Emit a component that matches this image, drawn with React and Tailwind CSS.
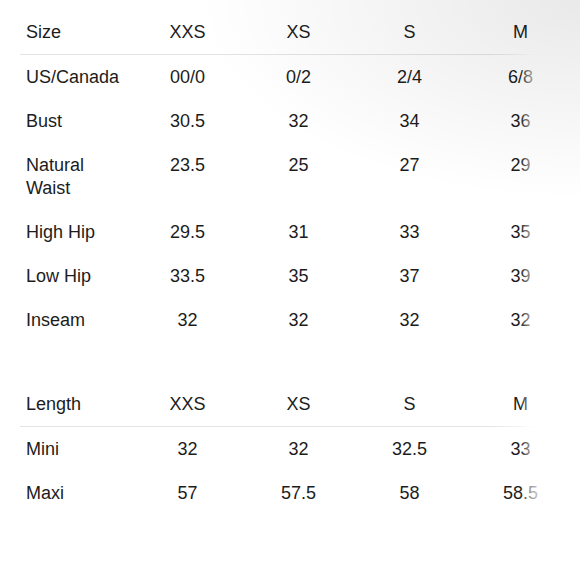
import React from "react"

const sizes = ["XXS", "XS", "S", "M"]

const bodyRows = [
  { label: "US/Canada", values: ["00/0", "0/2", "2/4", "6/8"] },
  { label: "Bust", values: ["30.5", "32", "34", "36"] },
  { label: ["Natural", "Waist"], values: ["23.5", "25", "27", "29"] },
  { label: "High Hip", values: ["29.5", "31", "33", "35"] },
  { label: "Low Hip", values: ["33.5", "35", "37", "39"] },
  { label: "Inseam", values: ["32", "32", "32", "32"] },
]

const lengthRows = [
  { label: "Mini", values: ["32", "32", "32.5", "33"] },
  { label: "Maxi", values: ["57", "57.5", "58", "58.5"] },
]

function Row({ label, values }) {
  return (
    <div className="grid grid-cols-[112px_111px_111px_111px_111px] py-[10.5px] leading-[23px]">
      <div className="pl-[6px]">
        {Array.isArray(label) ? (
          <>
            {label[0]}
            <br />
            {label[1]}
          </>
        ) : (
          label
        )}
      </div>
      {values.map((v, i) => (
        <div key={i} className="text-center">
          {v}
        </div>
      ))}
    </div>
  )
}

function SizeTable({ title, rows }) {
  return (
    <div>
      <Row label={title} values={sizes} />
      <div className="h-px w-[522px] bg-[linear-gradient(to_right,#e4e4e4_90%,rgba(228,228,228,0))]" />
      {rows.map((r, i) => (
        <Row key={i} label={r.label} values={r.values} />
      ))}
    </div>
  )
}

export default function App() {
  return (
    <div className="relative w-[580px] h-[580px] overflow-hidden bg-white font-['Liberation_Sans',Arial,sans-serif] text-[18px] text-[#1c1c1c]">
      <div className="pl-[20px] pt-[10px] flex flex-col gap-[40px]">
        <SizeTable title="Size" rows={bodyRows} />
        <SizeTable title="Length" rows={lengthRows} />
      </div>
      {/* right edge fade */}
      <div className="absolute top-0 right-0 h-full w-[60px] bg-[linear-gradient(to_right,rgba(255,255,255,0)_0px,rgba(255,255,255,0.55)_10px,rgba(255,255,255,0.75)_18px,rgba(255,255,255,0.9)_36px)] [mask-image:linear-gradient(to_bottom,transparent_30px,black_70px)]" />
      {/* corner shading */}
      <div className="absolute inset-0 pointer-events-none bg-[radial-gradient(ellipse_380px_200px_at_100%_0%,rgba(0,0,0,0.085),rgba(0,0,0,0))]" />
    </div>
  )
}
